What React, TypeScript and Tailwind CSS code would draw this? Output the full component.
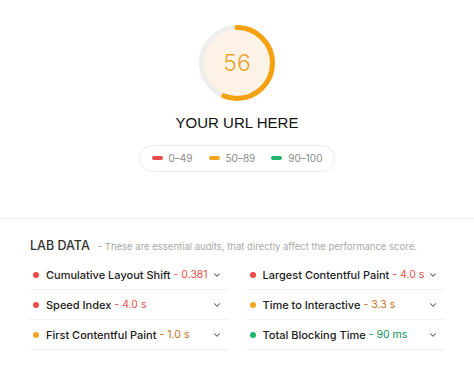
import { ChevronDown } from "lucide-react";

type Metric = {
  name: string;
  value: string;
  status: "fail" | "average" | "pass";
};

const STATUS = {
  fail: { dot: "bg-[#ee4b4b]", text: "text-[#e5534b]" },
  average: { dot: "bg-[#f5a623]", text: "text-[#c8701e]" },
  pass: { dot: "bg-[#18b86a]", text: "text-[#11935a]" },
};

const LEFT: Metric[] = [
  { name: "Cumulative Layout Shift", value: "0.381", status: "fail" },
  { name: "Speed Index", value: "4.0 s", status: "fail" },
  { name: "First Contentful Paint", value: "1.0 s", status: "average" },
];

const RIGHT: Metric[] = [
  { name: "Largest Contentful Paint", value: "4.0 s", status: "fail" },
  { name: "Time to Interactive", value: "3.3 s", status: "average" },
  { name: "Total Blocking Time", value: "90 ms", status: "pass" },
];

function Gauge({ score }: { score: number }) {
  const r = 35.5;
  const c = 2 * Math.PI * r;
  return (
    <div className="relative h-[78px] w-[78px]">
      <svg viewBox="0 0 78 78" className="h-full w-full -rotate-90">
        <circle cx="39" cy="39" r={r} fill="#fcf2e6" stroke="#f0eeec" strokeWidth="5" />
        <circle
          cx="39"
          cy="39"
          r={r}
          fill="none"
          stroke="#f5a00f"
          strokeWidth="5"
          strokeLinecap="round"
          strokeDasharray={`${(c * score) / 100} ${c}`}
        />
      </svg>
      <span className="absolute inset-0 flex items-center justify-center text-[23px] font-light text-[#eaa433]">
        {score}
      </span>
    </div>
  );
}

function MetricRow({ metric }: { metric: Metric }) {
  const s = STATUS[metric.status];
  return (
    <div className="flex h-[30px] items-center whitespace-nowrap border-b border-[#f1f1f1] pl-[3px] pr-[6px]">
      <span className={`h-[6px] w-[6px] shrink-0 rounded-full ${s.dot}`} />
      <span className="ml-[7px] text-[11px] font-medium text-[#222]">{metric.name}</span>
      <span className={`ml-[3px] text-[10.5px] ${s.text}`}>- {metric.value}</span>
      <ChevronDown className="ml-auto h-[10px] w-[10px] shrink-0 text-[#555]" strokeWidth={2.5} />
    </div>
  );
}

function LegendItem({ color, label }: { color: string; label: string }) {
  return (
    <span className="flex items-center gap-[6px]">
      <span className={`h-[4px] w-[11px] rounded-full ${color}`} />
      <span className="text-[10px] text-[#8a8a8a]">{label}</span>
    </span>
  );
}

export default function App() {
  return (
    <div className="h-[366px] w-[474px] bg-white font-['Inter',sans-serif]">
      {/* Score */}
      <div className="flex flex-col items-center border-b border-[#f0f0f0] pt-[24px] pb-[46px]">
        <Gauge score={56} />
        <h1 className="mt-[10px] font-['Liberation_Sans',Arial,sans-serif] text-[15px] text-[#111]">
          YOUR URL HERE
        </h1>
        <div className="mt-[10px] flex h-[27px] items-center gap-[16px] rounded-full border border-[#ececec] px-[12px]">
          <LegendItem color="bg-[#e74b4b]" label="0–49" />
          <LegendItem color="bg-[#f4a41d]" label="50–89" />
          <LegendItem color="bg-[#1fb66b]" label="90–100" />
        </div>
      </div>

      {/* Lab data */}
      <div className="px-[30px] pt-[18px]">
        <div className="flex items-baseline">
          <span className="text-[12.5px] font-medium text-[#333]">LAB DATA</span>
          <span className="ml-[8px] text-[9.5px] text-[#a8a8a8]">
            - These are essential audits, that directly affect the performance score.
          </span>
        </div>
        <div className="mt-[5px] grid grid-cols-2 gap-x-[19px]">
          <div>
            {LEFT.map((m) => (
              <MetricRow key={m.name} metric={m} />
            ))}
          </div>
          <div>
            {RIGHT.map((m) => (
              <MetricRow key={m.name} metric={m} />
            ))}
          </div>
        </div>
      </div>
    </div>
  );
}
